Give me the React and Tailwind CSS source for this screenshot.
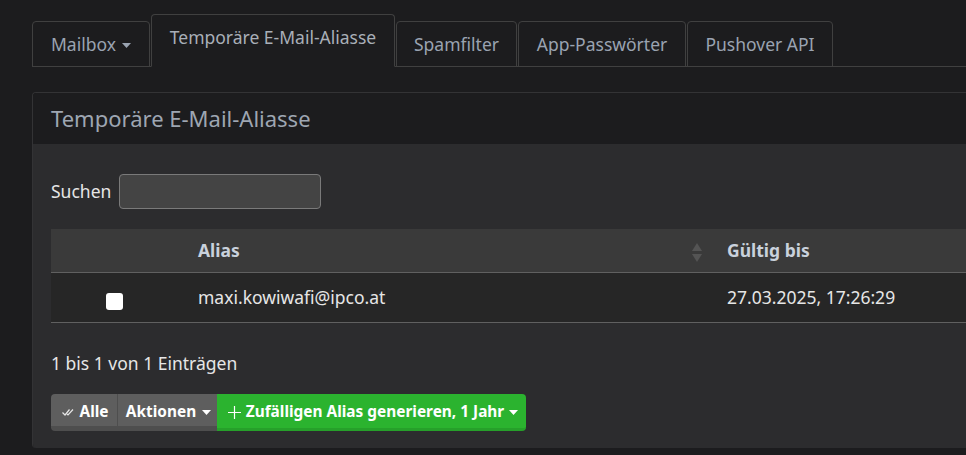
import React from "react";

function Caret({ className = "" }) {
  return (
    <svg width="9" height="5" viewBox="0 0 9 5" className={className}>
      <path d="M0 0 L9 0 L4.5 5 Z" fill="currentColor" />
    </svg>
  );
}

export default function App() {
  const font = { fontFamily: '"Noto Sans", "Open Sans", sans-serif' };
  return (
    <div
      className="w-[966px] h-[455px] overflow-hidden bg-[#1c1c1e] text-[17.5px]"
      style={font}
    >
      <div className="pl-[32px] pt-[14px]">
        {/* Tabs */}
        <div className="flex items-end gap-[1px] border-b border-[#404040] h-[53px]">
          <div className="-mb-px h-[46px] w-[118px] flex items-center justify-center gap-[6px] border border-[#404040] rounded-t-[4px] text-[#9aa3b1]">
            <span>Mailbox</span>
            <Caret className="mt-[2px]" />
          </div>
          <div className="-mb-px h-[53px] w-[244px] flex justify-center pt-[9px] border border-[#404040] border-b-[#1c1c1e] rounded-t-[4px] bg-[#1c1c1e] text-[#a9afb8]">
            <span>Temporäre E-Mail-Aliasse</span>
          </div>
          <div className="-mb-px h-[46px] w-[121px] flex items-center justify-center border border-[#404040] rounded-t-[4px] text-[#9aa3b1]">
            Spamfilter
          </div>
          <div className="-mb-px h-[46px] w-[168px] flex items-center justify-center border border-[#404040] rounded-t-[4px] text-[#9aa3b1]">
            App-Passwörter
          </div>
          <div className="-mb-px h-[46px] w-[146px] flex items-center justify-center border border-[#404040] rounded-t-[4px] text-[#9aa3b1]">
            Pushover API
          </div>
        </div>

        {/* Panel */}
        <div className="mt-[25px] border-l border-t border-[#333335] rounded-tl-[4px] rounded-bl-[4px] overflow-hidden">
          <div className="h-[51px] flex items-center pl-[18px] text-[22px] text-[#9ea6b2] bg-[#1c1c1e]">
            Temporäre E-Mail-Aliasse
          </div>
          <div className="bg-[#2c2c2e] pl-[18px] pt-[30px] pb-[17px]">
            <div className="flex items-center gap-[8px] text-[#e6e6e6]">
              <span>Suchen</span>
              <div className="w-[202px] h-[35px] bg-[#444444] border border-[#7a7a7a] rounded-[4px]" />
            </div>

            <div className="mt-[20px]">
              <div className="flex h-[44px] bg-[#3a3a3a] border-b border-[#606060] font-bold text-[#c9d1dc]">
                <div className="w-[127px]" />
                <div className="w-[529px] flex items-center pl-[20px] pr-[5px] justify-between">
                  <span>Alias</span>
                  <svg width="10" height="19" viewBox="0 0 10 19" className="mt-[4px]">
                    <path d="M5 0 L10 8 L0 8 Z" fill="#545454" />
                    <path d="M0 11 L10 11 L5 19 Z" fill="#545454" />
                  </svg>
                </div>
                <div className="flex-1 flex items-center pl-[20px]">Gültig bis</div>
              </div>
              <div className="flex h-[50px] bg-[#262626] border-b border-[#606060] text-[#e6e6e6]">
                <div className="w-[127px] flex items-center justify-center pt-[8px]">
                  <div className="w-[17px] h-[17px] bg-white rounded-[3px]" />
                </div>
                <div className="w-[529px] flex items-center pl-[20px]">maxi.kowiwafi@ipco.at</div>
                <div className="flex-1 flex items-center pl-[20px]">27.03.2025, 17:26:29</div>
              </div>
            </div>

            <div className="mt-[28px] text-[#e6e6e6] leading-[24px]">1 bis 1 von 1 Einträgen</div>

            <div className="mt-[19px] flex h-[37px] text-[15.4px] font-bold text-white">
              <div className="w-[67px] flex items-center justify-center gap-[5px] pl-[3px] bg-[#5e5e5e] border-b-[5px] border-[#4e4e4e] rounded-l-[4px] pt-[4px] border-r border-r-[#4e4e4e]">
                <svg width="12" height="8" viewBox="0 0 12 8">
                  <path d="M0.5 4.5 L3 7 L7.5 1.5 M5 6 L6 7 L11 1.5" stroke="#e6e6e6" strokeWidth="1.2" fill="none" />
                </svg>
                <span>Alle</span>
              </div>
              <div className="w-[99px] flex items-center justify-center gap-[6px] pl-[2px] bg-[#5e5e5e] border-b-[5px] border-[#4e4e4e] pt-[4px]">
                <span>Aktionen</span>
                <Caret />
              </div>
              <div className="w-[309px] flex items-center justify-center gap-[5px] pl-[3px] bg-[#2bb32f] border-b-[3px] border-[#26a02a] rounded-r-[4px] pt-[2px]">
                <svg width="13" height="13" viewBox="0 0 13 13">
                  <path d="M6.5 0 V13 M0 6.5 H13" stroke="white" strokeWidth="1.2" />
                </svg>
                <span>Zufälligen Alias generieren, 1 Jahr</span>
                <Caret />
              </div>
            </div>
          </div>
        </div>
      </div>
    </div>
  );
}
